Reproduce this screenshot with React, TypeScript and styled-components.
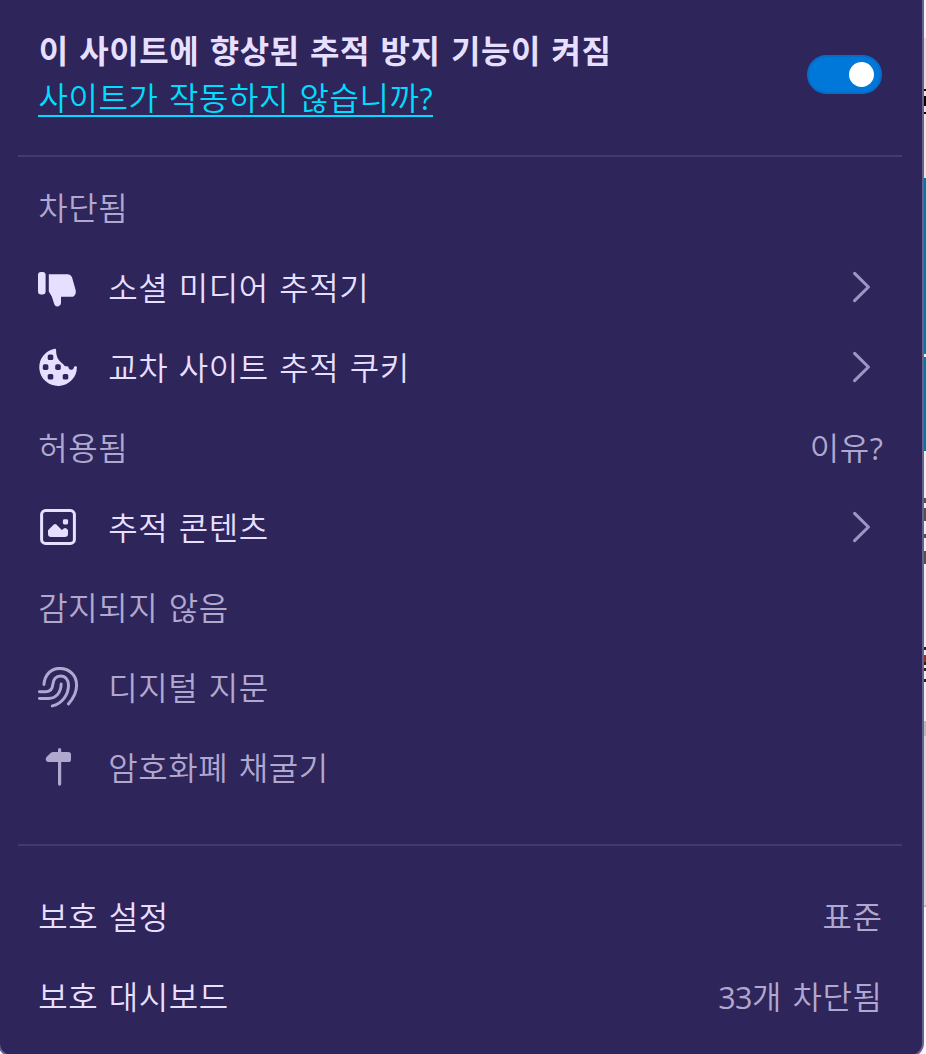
import React from "react";
import styled, { createGlobalStyle, css } from "styled-components";

const GlobalStyle = createGlobalStyle`
  * { box-sizing: border-box; }
  body {
    margin: 0;
    background: #f6f5f7;
    font-family: "Open Sans", "Noto Sans CJK KR", sans-serif;
    overflow: hidden;
  }
`;

const ink = "#e7dfff";
const muted = "#b1a8d0";
const surface = "#2e255a";

const Screen = styled.div`
  display: flex;
  width: 926px;
  height: 1054px;
  overflow: hidden;
`;

const Panel = styled.main`
  flex: none;
  width: 926px;
  height: 1057px;
  margin-left: -2px;
  background: ${surface};
  border: 2px solid #6a5f8e;
  border-top: 0;
  border-radius: 0 0 14px 14px;
`;

const PageEdge = styled.div`
  flex: none;
  width: 2px;
`;

const Strip = styled.div<{ $h: number; $c: string }>`
  height: ${(p) => p.$h}px;
  background: ${(p) => p.$c};
`;

const Header = styled.header`
  display: flex;
  justify-content: space-between;
  height: 155px;
  padding: 28px 40px 0 38px;
`;

const textBase = css`
  font-size: 32px;
  font-weight: 350;
  line-height: 46px;
  letter-spacing: 0.56px;
  word-spacing: 1.6px;
  white-space: nowrap;
`;

const Title = styled.h1`
  ${textBase}
  margin: 0;
  padding-left: 0.7px;
  font-weight: 700;
  word-spacing: 1.6px;
  color: ${ink};
`;

const HelpLink = styled.a`
  ${textBase}
  display: block;
  width: 395px;
  height: 43px;
  padding: 1px 0 0 0.6px;
  border-bottom: 2px solid #00ddff;
  color: #00ddff;
`;

const Latin = styled.span`
  font-size: 30.5px;
  font-weight: 400;
  letter-spacing: -0.6px;
`;

const Toggle = styled.button`
  display: flex;
  align-items: center;
  justify-content: flex-end;
  width: 75px;
  height: 39px;
  margin: 27px 0 0;
  padding: 0 6px 0 0;
  border: 2px solid #056dc8;
  border-radius: 20px;
  background: #0078d9;
`;

const Knob = styled.span`
  width: 25px;
  height: 25px;
  border-radius: 50%;
  background: #fff;
`;

const Rule = styled.hr`
  height: 2px;
  margin: 0 20px 0 18px;
  border: 0;
  background: #433a6b;
`;

const List = styled.section<{ $top: number; $bottom?: number }>`
  padding: ${(p) => p.$top}px 40px ${(p) => p.$bottom ?? 0}px 38px;
`;

const Row = styled.div<{ $muted?: boolean }>`
  ${textBase}
  display: flex;
  align-items: center;
  height: 80px;
  color: ${(p) => (p.$muted ? muted : ink)};
`;

const IconSlot = styled.span`
  display: flex;
  width: 70px;
  height: 40px;
  margin-bottom: 2px;
`;

const Label = styled.span`
  flex: 1;
  padding-left: 0.3px;
`;

const Value = styled.span`
  margin-right: -0.4px;
  color: ${muted};
`;

const ChevronBox = styled.svg`
  width: 20px;
  height: 32px;
  margin: 0 11px 2px 0;
`;

const Chevron = () => (
  <ChevronBox viewBox="0 0 20 32" fill="none" stroke="#9f95c2" strokeWidth="3.1" strokeLinecap="round" strokeLinejoin="round">
    <path d="M3.6 2.4 17.4 16 3.6 29.6" />
  </ChevronBox>
);

const ThumbDown = () => (
  <svg width="40" height="40" fill={ink}>
    <rect x="0" y="5" width="7.6" height="22.6" rx="3" />
    <path d="M10.8 7.2h18.7a5 5 0 0 1 4.600 3.400l3.500 12.300c.8 3.400-.8 6.900-4 6.900H23v5.600a3.500 3.500 0 0 1-6.700 1.800l-2.400-7.400-3.100-5.200z" />
  </svg>
);

const Cookie = () => (
  <svg width="40" height="40">
    <path
      fill={ink}
      d="M16.8 1.7A18.8 18.8 0 1 0 38.9 20.2c0-1.2-2.5-1.2-3 .2-.6 3.3-4.9 3.2-5.4.2-.3-1.9-2-1.1-3-1.4-1.6-.5-2.1-2.2-3.4-3-4-2.6-6-7-6-12.9 0-1-.3-1.7-1.3-1.6z"
    />
    <g fill={surface}>
      <rect x="9.7" y="7.5" width="5.6" height="5.6" rx="1.6" />
      <rect x="4.8" y="17.3" width="5.6" height="5.6" rx="1.6" />
      <rect x="17.2" y="17.3" width="5.6" height="5.6" rx="1.6" />
      <rect x="9.7" y="27" width="5.6" height="5.6" rx="1.6" />
      <rect x="24.7" y="27" width="5.6" height="5.6" rx="1.6" />
    </g>
  </svg>
);

const Picture = () => (
  <svg width="40" height="40" fill={ink}>
    <rect x="3.6" y="3.6" width="32.8" height="32.8" rx="4" fill="none" stroke={ink} strokeWidth="3" />
    <path d="M10 23.2l5.8-5.6q1.3-1.2 2.6 0l5.4 5.400 2-1.400q1.300-1 2.600 0l1.600 1.500V26.800a3.200 3.200 0 0 1-3.200 3.200H13.200a3.200 3.200 0 0 1-3.200-3.200z" />
    <rect x="24.9" y="12.3" width="5.2" height="5.2" rx="1.4" />
  </svg>
);

const Fingerprint = () => (
  <svg width="42" height="42" fill="none" stroke={muted} strokeWidth="3" strokeLinecap="round">
    <path d="M6 17.5C6.5 8 13 1.4 21.5 1.4c10 0 17.1 7 17.1 16.8 0 8-4 14-8.2 18.7" />
    <path d="M1.4 24.7H8c4.500 0 6.500-3 6.900-7.500C15.3 12.5 18 9 22.5 9c5 0 8 4 8 9 0 10-6.500 18.500-16.200 20.900" />
    <path d="M1.4 31.4h9c8 0 12.500-6 12.800-14.400" />
  </svg>
);

const Hammer = () => (
  <svg width="42" height="42" fill={muted}>
    <path d="M20 2.700a1.600 1.600 0 0 1 3.200 0V5h7.200a2.600 2.600 0 0 1 2.600 2.600v4.800a2.600 2.600 0 0 1-2.600 2.600h-7.200v22.100a1.600 1.600 0 0 1-3.200 0V15H10.500a3 3 0 0 1-2.700-3.400q.2-1.400 1.200-2.200l3.600-3.300q1.200-1.100 2.700-1.100H20z" />
  </svg>
);

const edge: [number, string][] = [
  [38, "#f6f3f4"], [51, "#e6dcdb"], [2, "#000"], [5, "#f0e0dc"], [10, "#000"], [6, "#f0e0dc"], [2, "#000"],
  [64, "#f0e4e2"], [176, "#007a9f"], [3, "#eee"], [94, "#007a9f"],
  [47, "#eee"], [5, "#505052"], [5, "#eee"], [13, "#505052"], [13, "#eee"], [4, "#505052"],
  [13, "#eee"], [13, "#505052"], [83, "#eee"], [3, "#222"], [5, "#eee"], [7, "#8a3a20"],
  [3, "#222"], [3, "#eee"], [3, "#222"], [8, "#eee"], [3, "#222"], [39, "#eee"],
  [15, "#b9b9c0"], [169, "#d8d8dc"], [2, "#b9b9c0"], [147, "#f8f8fa"],
];

export default function App() {
  return (
    <>
      <GlobalStyle />
      <Screen>
        <Panel>
          <Header>
            <div>
              <Title>이 사이트에 향상된 추적 방지 기능이 켜짐</Title>
              <HelpLink>사이트가 작동하지 않습니까<Latin>?</Latin></HelpLink>
            </div>
            <Toggle aria-pressed="true"><Knob /></Toggle>
          </Header>
          <Rule />
          <List $top={11} $bottom={36}>
            <Row $muted><Label>차단됨</Label></Row>
            <Row><IconSlot><ThumbDown /></IconSlot><Label>소셜 미디어 추적기</Label><Chevron /></Row>
            <Row><IconSlot><Cookie /></IconSlot><Label>교차 사이트 추적 쿠키</Label><Chevron /></Row>
            <Row $muted><Label>허용됨</Label><Value>이유<Latin>?</Latin></Value></Row>
            <Row><IconSlot><Picture /></IconSlot><Label>추적 콘텐츠</Label><Chevron /></Row>
            <Row $muted><Label>감지되지 않음</Label></Row>
            <Row $muted><IconSlot><Fingerprint /></IconSlot><Label>디지털 지문</Label></Row>
            <Row $muted><IconSlot><Hammer /></IconSlot><Label>암호화폐 채굴기</Label></Row>
          </List>
          <Rule />
          <List $top={31}>
            <Row><Label>보호 설정</Label><Value>표준</Value></Row>
            <Row><Label>보호 대시보드</Label><Value><Latin>33</Latin>개 차단됨</Value></Row>
          </List>
        </Panel>
        <PageEdge>
          {edge.map(([h, c], i) => <Strip key={i} $h={h} $c={c} />)}
        </PageEdge>
      </Screen>
    </>
  );
}
